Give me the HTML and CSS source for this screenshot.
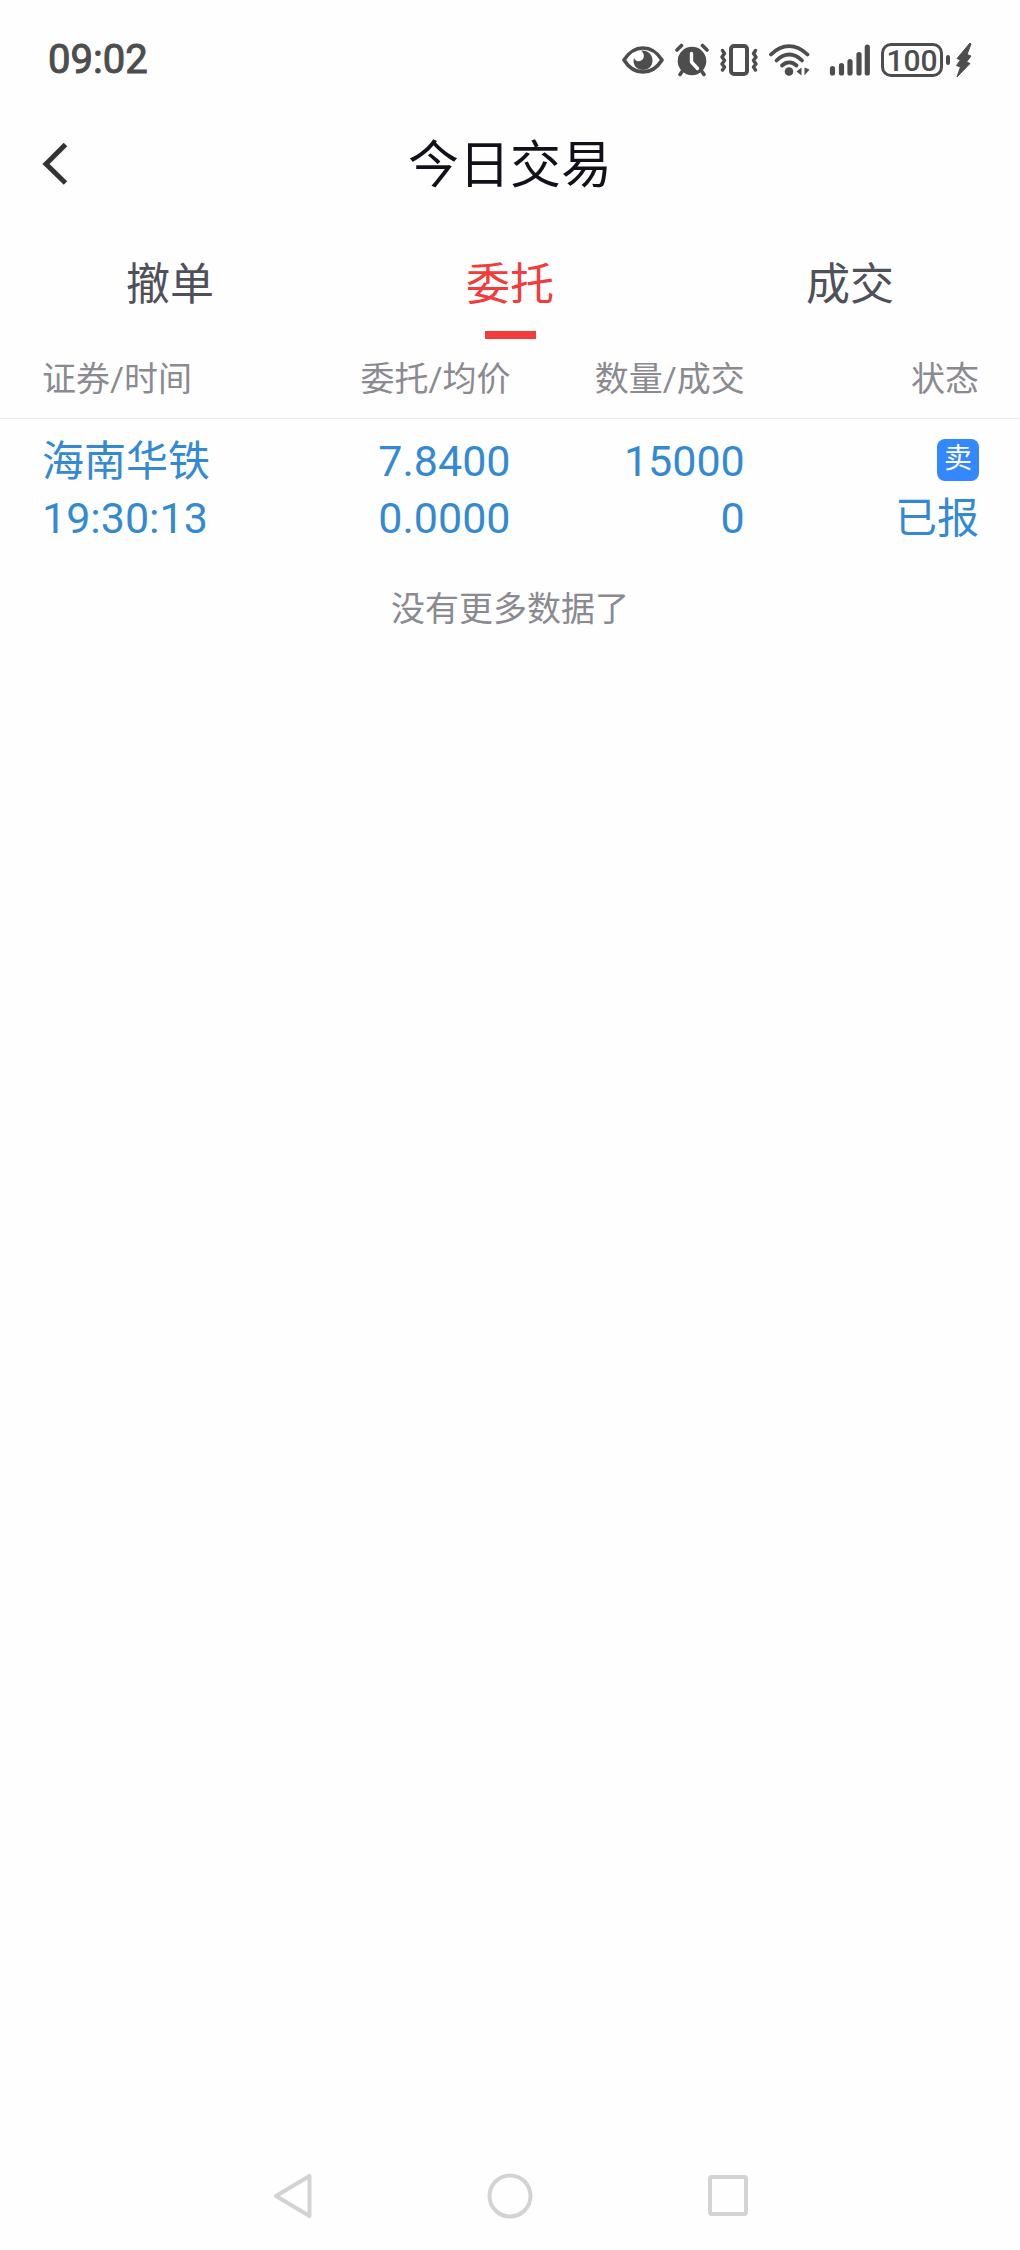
FILE: index.html
```html
<!DOCTYPE html>
<html lang="zh-CN">
<head>
    <meta charset="UTF-8">
    <meta name="viewport" content="width=device-width, initial-scale=1.0">
    <title>今日交易</title>
    <link rel="stylesheet" href="styles.css">
</head>
<body>
    <div class="status-bar">
        <span class="clock">09:02</span>
        <div class="status-icons">
            <svg width="42" height="34" viewBox="0 0 42 34">
                <path d="M2 17C7 9 13 5 21 5s14 4 19 12c-5 8-11 12-19 12S7 25 2 17z" fill="none" stroke="#4d4d4d" stroke-width="3.6" stroke-linejoin="round"/>
                <path d="M19 7.500c4 3 4 9-1 10.500-3 .8-5-.5-6-3-2 7 3 12 9 12 5.500 0 9.500-4 9.500-9.500C30.500 11 25.500 7 19 7.500z" fill="#4d4d4d"/>
            </svg>
            <svg width="34" height="34" viewBox="0 0 34 34">
                <circle cx="17" cy="18" r="14.300" fill="#4d4d4d"/>
                <path d="M2 7l4.500-4.500M32 7l-4.500-4.500M7.500 28L5 31.500M26.500 28l2.500 3.500" stroke="#4d4d4d" stroke-width="3.600" stroke-linecap="round"/>
                <path d="M16.500 10.500v8.500l6 6.500" fill="none" stroke="#fefefe" stroke-width="3.400" stroke-linecap="round" stroke-linejoin="round"/>
            </svg>
            <svg width="38" height="34" viewBox="0 0 38 34">
                <g fill="none" stroke="#4d4d4d" stroke-linecap="round" stroke-linejoin="round">
                    <rect x="11" y="3" width="16" height="28" rx="3" stroke-width="4"/>
                    <path d="M2.500 7.500l2 3-2.500 3.500 2.500 3.500-2.500 3.500 2.500 3-2 3M35.500 7.500l-2 3 2.500 3.500-2.500 3.500 2.500 3.500-2.500 3 2 3" stroke-width="3.400"/>
                </g>
            </svg>
            <svg width="42" height="34" viewBox="0 0 42 34">
                <g fill="none" stroke="#4d4d4d" stroke-width="3.800" stroke-linecap="round">
                    <path d="M2 11.500C13 .3 27 .3 38.500 11.500"/>
                    <path d="M7.500 17.500c8-8 17.500-8 25.500 0"/>
                    <path d="M13 22.500c4.500-4 10-4 14.500 0"/>
                </g>
                <circle cx="20" cy="28.500" r="4.300" fill="#4d4d4d"/>
                <path d="M32.500 24.500v8l-5-4zM35.500 24.500v8l5-6z" fill="#4d4d4d"/>
            </svg>
            <svg width="48" height="34" viewBox="0 0 48 34">
                <path d="M10.500 25.500v4.500M19.500 22.500v7.500M28 18.500v11.500M37 11.500v18.500M45.300 4v26" stroke="#4d4d4d" stroke-width="5.200" stroke-linecap="round"/>
            </svg>
            <div class="battery">
                <span class="battery-level">100</span>
                <span class="battery-tip"></span>
                <svg width="16" height="34" viewBox="0 0 16 34">
                    <path d="M14 0L1 15.500l3.500 1.500L.5 22.500l4 1.500L1 34l13-13.500-3.500-1.500L15 13l-4-1.500L15 1z" fill="#4d4d4d" stroke="#4d4d4d" stroke-linejoin="round"/>
                </svg>
            </div>
        </div>
    </div>

    <header class="header">
        <button class="back" aria-label="返回">
            <svg width="28" height="46" viewBox="0 0 28 46">
                <path d="M23.500 3.500L4 23l19.500 19" fill="none" stroke="#333" stroke-width="5"/>
            </svg>
        </button>
        <h1>今日交易</h1>
    </header>

    <nav class="tabs">
        <a class="tab" href="#">撤单</a>
        <a class="tab active" href="#">委托</a>
        <a class="tab" href="#">成交</a>
    </nav>

    <main>
        <table class="orders">
            <thead>
                <tr>
                    <th>证券/时间</th>
                    <th>委托/均价</th>
                    <th>数量/成交</th>
                    <th>状态</th>
                </tr>
            </thead>
            <tbody>
                <tr>
                    <td><div>海南华铁</div><div class="num">19:30:13</div></td>
                    <td><div class="num">7.8400</div><div class="num">0.0000</div></td>
                    <td><div class="num">15000</div><div class="num">0</div></td>
                    <td><div class="side"><span class="badge">卖</span></div><div>已报</div></td>
                </tr>
            </tbody>
        </table>
        <p class="no-more">没有更多数据了</p>
    </main>

    <div class="nav-bar">
        <button aria-label="后退">
            <svg width="48" height="48" viewBox="0 0 48 48">
                <path d="M41.500 4L8 24l33.500 20z"/>
            </svg>
        </button>
        <button aria-label="主页">
            <svg width="48" height="48" viewBox="0 0 48 48">
                <circle cx="24" cy="24" r="20.500"/>
            </svg>
        </button>
        <button aria-label="最近任务">
            <svg width="48" height="48" viewBox="0 0 48 48">
                <rect x="6" y="5" width="36" height="37" rx="2"/>
            </svg>
        </button>
    </div>
</body>
</html>
```
FILE: styles.css
```css
body {
    display: flex;
    flex-direction: column;
    min-height: 100vh;
    margin: 0;
    background-color: #fefefe;
    color: #50505a;
    font-family: Roboto, "Noto Sans CJK SC", sans-serif;
}
button {
    padding: 0;
    background: none;
    border: none;
    cursor: pointer;
}
svg {
    display: block;
}

/* phone status bar */
.status-bar {
    display: flex;
    justify-content: space-between;
    align-items: center;
    height: 120px;
    padding: 0 48px;
    color: #4d4d4d;
}
.clock {
    font-size: 40px;
    font-weight: 400;
    line-height: 48px;
    -webkit-text-stroke: 1px #4d4d4d;
}
.status-icons {
    display: flex;
    align-items: center;
    gap: 11px;
}
.battery {
    display: flex;
    align-items: center;
    gap: 3px;
}
.battery-level {
    box-sizing: border-box;
    width: 62px;
    height: 34px;
    border: 3px solid #4d4d4d;
    border-radius: 10px;
    font-size: 30px;
    font-weight: 500;
    line-height: 29px;
    text-align: center;
}
.battery-tip {
    width: 4px;
    height: 10px;
    margin-right: 3px;
    border-radius: 2px;
    background-color: #4d4d4d;
}

/* title */
.header {
    display: grid;
    grid-template-columns: 1fr auto 1fr;
    align-items: center;
    height: 88px;
    padding: 0 42px;
}
.back {
    justify-self: start;
}
h1 {
    margin: 0;
    padding-top: 4px;
    color: #11111a;
    font-size: 51px;
    font-weight: 400;
    line-height: 60px;
}

/* tabs */
.tabs {
    display: flex;
    height: 131px;
}
.tab {
    display: flex;
    flex: 1;
    flex-direction: column;
    align-items: center;
    justify-content: space-between;
    color: #50505a;
    font-size: 44px;
    line-height: 64px;
    padding-top: 45px;
    text-decoration: none;
}
.active {
    color: #f23c3c;
}
.active::after {
    content: "";
    width: 51px;
    height: 8px;
    background-color: #f53a3a;
}

/* orders */
.orders {
    width: 100%;
    border-collapse: collapse;
    border-spacing: 0;
    display: block;
}
.orders thead,
.orders tbody {
    display: block;
}
.orders tr {
    display: grid;
    grid-template-columns: repeat(4, 1fr);
    padding: 0 41px 0 42px;
}
.orders thead tr {
    border-bottom: 1px solid #eaeaea;
}
.orders th {
    padding: 1px 0 0;
    color: #8a8a90;
    font-size: 34px;
    font-weight: 400;
    line-height: 78px;
    text-align: right;
}
.orders td {
    padding: 14px 0 12px;
    color: #348ad2;
    font-size: 42px;
    line-height: 57px;
    text-align: right;
}
.orders th:first-child,
.orders td:first-child {
    text-align: left;
}
.orders td > div {
    height: 57px;
}
.orders .num {
    font-size: 43px;
}
.orders .side {
    display: flex;
    align-items: center;
    justify-content: flex-end;
    height: 54px;
    padding-bottom: 3px;
}
.badge {
    width: 42px;
    height: 42px;
    border-radius: 8px;
    background-color: #3388ff;
    color: #fff;
    font-size: 28px;
    line-height: 40px;
    text-align: center;
}
.no-more {
    margin: 25px 0;
    color: #8a8a90;
    font-size: 34px;
    line-height: 50px;
    text-align: center;
}

/* system buttons */
.nav-bar {
    display: flex;
    justify-content: center;
    width: 64%;
    height: 108px;
    margin: auto auto 0;
}
.nav-bar button {
    display: flex;
    flex: 1;
    align-items: center;
    justify-content: center;
}
.nav-bar svg {
    fill: none;
    stroke: #d3d3d3;
    stroke-width: 4;
    stroke-linejoin: round;
}
```
